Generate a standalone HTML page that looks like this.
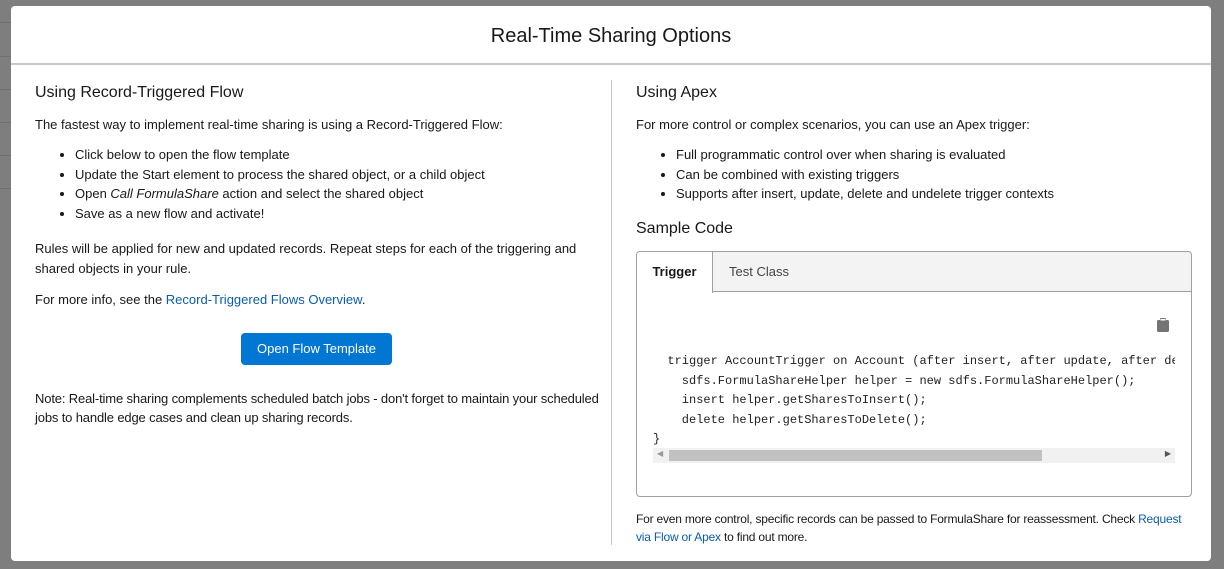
<!DOCTYPE html>
<html><head><style>
*{box-sizing:border-box;margin:0;padding:0}
body{width:1224px;height:569px;background:#7e7e7e;font-family:"Liberation Sans",sans-serif;color:#181818;font-size:13px;position:relative;overflow:hidden}
.bgl{position:absolute;height:1px;background:#6f6f6f;left:0;width:12px}
.modal{position:absolute;left:11px;top:6px;width:1200px;height:555px;background:#fff;border-radius:4px}
.hdr{height:59px;border-bottom:2px solid #c9c9c9;text-align:center;font-size:20px;line-height:60px;color:#181818}
.col{position:absolute;top:78px}
h2{font-size:16px;font-weight:normal;margin-bottom:13px}
p{line-height:20px}
ul{margin:10px 0 16px 40px;line-height:19.5px}
a{color:#0b5cab;text-decoration:none}
.btn{position:absolute;left:230px;top:327px;width:151px;height:32px;background:#0176d3;color:#fff;border-radius:4px;text-align:center;line-height:32px;font-size:13px}
.div{position:absolute;left:600px;top:74px;width:1px;height:465px;background:#c9c9c9}
.tabs{position:absolute;left:625px;top:245px;width:556px;height:246px;border:1px solid #a0a0a0;border-radius:4px;overflow:hidden}
.tbar{height:40px;background:#f3f3f3;border-bottom:1px solid #a0a0a0;position:relative}
.t1{position:absolute;left:0;top:0;width:76px;height:41px;background:#fff;border-right:1px solid #a0a0a0;font-weight:bold;text-align:center;line-height:40px}
.t2{position:absolute;left:92px;top:0;line-height:40px;color:#444}
pre{position:absolute;left:16px;top:100px;font-family:"Liberation Mono",monospace;font-size:12px;line-height:19.5px;color:#222;width:522px;overflow:hidden}
.sb{position:absolute;left:16px;top:196px;width:522px;height:15px;background:#f1f1f1}
.th{position:absolute;left:16px;top:2px;width:373px;height:11px;background:#c1c1c1}
</style></head><body>
<div class="bgl" style="top:22px"></div><div class="bgl" style="top:56px"></div><div class="bgl" style="top:89px"></div><div class="bgl" style="top:122px"></div><div class="bgl" style="top:155px"></div><div class="bgl" style="top:188px"></div>
<div class="modal">
<div class="hdr">Real-Time Sharing Options</div>
<div class="col" style="left:24px;width:582px">
<h2>Using Record-Triggered Flow</h2>
<p>The fastest way to implement real-time sharing is using a Record-Triggered Flow:</p>
<ul><li>Click below to open the flow template</li><li>Update the Start element to process the shared object, or a child object</li><li>Open <i>Call FormulaShare</i> action and select the shared object</li><li>Save as a new flow and activate!</li></ul>
<p style="width:560px">Rules will be applied for new and updated records. Repeat steps for each of the triggering and shared objects in your rule.</p>
<p style="margin-top:11px">For more info, see the <a>Record-Triggered Flows Overview</a>.</p>
<p style="margin-top:79px;line-height:19px;letter-spacing:-0.15px">Note: Real-time sharing complements scheduled batch jobs - don't forget to maintain your scheduled jobs to handle edge cases and clean up sharing records.</p>
</div>
<div class="btn">Open Flow Template</div>
<div class="div"></div>
<div class="col" style="left:625px;width:560px">
<h2>Using Apex</h2>
<p>For more control or complex scenarios, you can use an Apex trigger:</p>
<ul><li>Full programmatic control over when sharing is evaluated</li><li>Can be combined with existing triggers</li><li>Supports after insert, update, delete and undelete trigger contexts</li></ul>
<h2 style="margin-top:15px">Sample Code</h2>
</div>
<div class="tabs">
<div class="tbar"><div class="t1">Trigger</div><div class="t2">Test Class</div></div>
<svg style="position:absolute;left:520px;top:66px" width="12" height="14" viewBox="0 0 12 14"><rect x="0" y="2" width="12" height="12" rx="1.5" fill="#747474"/><rect x="3" y="0" width="6" height="3.5" rx="1" fill="#747474"/><rect x="3.5" y="1" width="5" height="1.5" fill="#fff"/></svg>
<pre>  trigger AccountTrigger on Account (after insert, after update, after del
    sdfs.FormulaShareHelper helper = new sdfs.FormulaShareHelper();
    insert helper.getSharesToInsert();
    delete helper.getSharesToDelete();
}</pre>
<div class="sb"><div class="th"></div><span style="position:absolute;left:4px;top:1px;font-size:8px;color:#999">◀</span><span style="position:absolute;right:4px;top:1px;font-size:8px;color:#555">▶</span></div>
</div>
<p style="position:absolute;left:625px;top:504px;width:556px;font-size:12px;line-height:18px;letter-spacing:-0.2px">For even more control, specific records can be passed to FormulaShare for reassessment. Check <a>Request via Flow or Apex</a> to find out more.</p>
</div>
</body></html>
